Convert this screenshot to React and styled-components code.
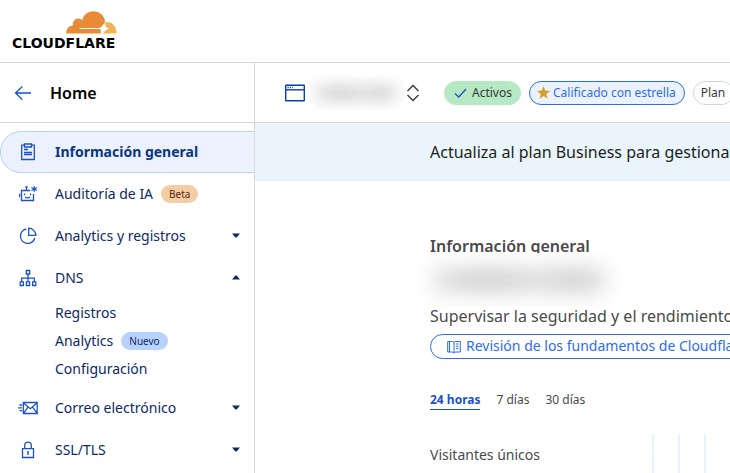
import React from "react";
import styled, { createGlobalStyle } from "styled-components";

const Global = createGlobalStyle`
  *, *::before, *::after { box-sizing: border-box; }
  html, body, #root { height: 100%; }
  body { margin: 0; background: #fff; color: #36393a; font-family: "Noto Sans", sans-serif; font-size: 14px; overflow: hidden; }
  button { font: inherit; color: inherit; background: none; border: 0; padding: 0; cursor: pointer; }
  a { color: inherit; text-decoration: none; }
  h1, p, ul { margin: 0; padding: 0; }
  ul { list-style: none; }
  svg { display: block; flex: none; }
`;

const Page = styled.div`
  display: flex;
  flex-direction: column;
  height: 100vh;
  overflow: hidden;
`;

const TopBar = styled.header`
  flex: none;
  height: 63px;
  padding: 11px 12px 0;
  border-bottom: 1px solid #d5d7d8;
`;

const Logo = styled.a`
  display: inline-flex;
  flex-direction: column;
  align-items: flex-start;

  svg {
    margin-left: 54px;
  }
`;

const Wordmark = styled.span`
  font-family: "DejaVu Sans", sans-serif;
  font-size: 14px;
  line-height: 18px;
  font-weight: 700;
  color: #000;
`;

const Body = styled.div`
  flex: 1;
  min-height: 0;
  display: flex;
`;

const Sidebar = styled.aside`
  flex: none;
  width: 255px;
  border-right: 1px solid #d5d7d8;
  overflow: hidden;
`;

const HomeLink = styled.a`
  display: flex;
  align-items: center;
  gap: 18px;
  height: 60px;
  padding-left: 14px;
  border-bottom: 1px solid #d5d7d8;
  font-size: 16px;
  font-weight: 600;
  color: #000;
`;

const Nav = styled.nav`
  padding-top: 8px;
`;

const NavItem = styled.a`
  display: flex;
  align-items: center;
  width: 100%;
  height: 42px;
  padding: 0 14px 2px 17px;
  border: 1px solid ${(p) => (p.$active ? "#b9d0fb" : "transparent")};
  border-right: 0;
  border-radius: 21px 0 0 21px;
  background: ${(p) => (p.$active ? "#ecf2fd" : "transparent")};
  font-size: 14px;
  font-weight: ${(p) => (p.$active ? 700 : 400)};
  color: ${(p) => (p.$active ? "#0c3584" : "#0b2a66")};
  text-align: left;
`;

const IconSlot = styled.span`
  display: flex;
  justify-content: center;
  width: 20px;
  margin-right: 17px;
  padding-top: 2px;
`;

const Caret = styled.svg`
  margin-left: auto;
`;

const SubList = styled.ul`
  padding: 0 0 4px 55px;
`;

const SubLink = styled.a`
  display: flex;
  align-items: center;
  height: 28px;
  padding-bottom: 2px;
  font-size: 14px;
  color: #0b2a66;
`;

const Tag = styled.span`
  margin: 2px 0 0 8px;
  padding: 0 8px;
  border-radius: 9px;
  font-size: 10px;
  line-height: 18px;
  background: ${(p) => (p.$tone === "orange" ? "#f4cda5" : "#b9d2fd")};
  color: ${(p) => (p.$tone === "orange" ? "#4d2a0c" : "#0b2a66")};
`;

const Main = styled.main`
  flex: 1;
  min-width: 0;
  overflow: hidden;
`;

const SiteBar = styled.div`
  display: flex;
  align-items: center;
  height: 60px;
  padding-left: 29px;
  border-bottom: 1px solid #d5d7d8;
  white-space: nowrap;
`;

const SitePicker = styled.button`
  display: flex;
  align-items: center;
  gap: 1px;
  margin-right: 24px;
`;

const Redacted = styled.span`
  display: flex;
  align-items: center;
  overflow: hidden;
  background: #fff;
  width: ${(p) => (p.$large ? "212px" : "98px")};
  height: ${(p) => (p.$large ? "53px" : "34px")};
  padding: ${(p) => (p.$large ? "0 18px 0 24px" : "0 8px")};

  &::before {
    content: "";
    flex: 1;
    height: ${(p) => (p.$large ? "22px" : "14px")};
    border-radius: 8px;
    background: linear-gradient(90deg, #d9d9d9, #c9c9c9 35%, #dadada 60%, #cacaca 80%, #d4d4d4);
    filter: blur(${(p) => (p.$large ? "11px" : "8px")});
  }
`;

const Badge = styled.span`
  display: flex;
  align-items: center;
  flex: none;
  gap: ${(p) => (p.$tone === "blue" ? "3px" : "4px")};
  height: 24px;
  margin-right: 8px;
  padding: 0 8px 0 ${(p) => (p.$tone === "green" ? "8px" : "7px")};
  border: 1px solid ${(p) => ({ green: "#b6e8c3", blue: "#2c6df0", plain: "#d5d7d8" })[p.$tone]};
  border-radius: 12px;
  background: ${(p) => ({ green: "#b6e8c3", blue: "#ecf2fd", plain: "#fff" })[p.$tone]};
  color: ${(p) => (p.$tone === "blue" ? "#2c6df0" : "#36393a")};
  font-size: 12px;
`;

const Banner = styled.p`
  height: 58px;
  padding-left: 175px;
  background: #e9f5fb;
  color: #1d1f20;
  font-size: 16px;
  line-height: 58px;
  white-space: nowrap;
`;

const Content = styled.section`
  padding: 54px 0 0 175px;
  white-space: nowrap;
  color: #4a4a4a;
`;

const Title = styled.h1`
  height: 18px;
  overflow: hidden;
  font-size: 16px;
  font-weight: 600;
  line-height: 22px;
`;

const SiteName = styled.div`
  margin-left: -20px;
`;

const Lead = styled.p`
  font-size: 16px;
  line-height: 20px;
`;

const GuideLink = styled.a`
  display: inline-flex;
  align-items: center;
  gap: 5px;
  height: 25px;
  margin-top: 8px;
  padding: 0 16px 2px;
  border: 1px solid #2c6df0;
  border-radius: 13px;
  color: #2c6df0;

  svg {
    margin-top: 2px;
  }
`;

const Ranges = styled.div`
  display: flex;
  gap: 16px;
  margin-top: 32px;
`;

const Range = styled.button`
  height: 19px;
  border-bottom: 1px solid ${(p) => (p.$active ? "#1d52c4" : "transparent")};
  color: ${(p) => (p.$active ? "#1d52c4" : "#4a4a4a")};
  font-size: 12px;
  font-weight: ${(p) => (p.$active ? 700 : 400)};
  line-height: 18px;
`;

const Metric = styled.div`
  display: flex;
  margin-top: 24px;
`;

const MetricLabel = styled.span`
  width: 222px;
  line-height: 42px;
`;

const svgProps = { fill: "none", stroke: "#1d52c4", strokeWidth: 1.3 };

const CloudLogo = () => (
  <svg width="51" height="23" viewBox="0 0 51 23" aria-hidden="true">
    <path fill="#e98b36" d="M.4 22.5C0 18.5 2.4 14.9 7 14.6C6.4 10.4 9.2 7.3 12.4 7.5C14 7.6 15.3 8.3 16.3 9.2C17.3 4 21.8.3 27.3.3C33.3.3 38.2 4.5 39 10.2L37.6 15.8L34.6 19L34.9 22.5Z" />
    <path fill="#f1b355" d="M39.6 11C46.2 10.3 50.6 15.1 50.4 22.5H36.2L38.2 20.3L43 17.5L39.4 15.7Z" />
    <path fill="#fff" d="M13 16.9H33.2Q36 16.5 37.5 12.5Q38.8 16.5 43 17.4Q38.8 18.2 37.5 22.5Q36.2 18.5 33.2 18H15Z" />
  </svg>
);

const BackIcon = () => (
  <svg width="18" height="18" viewBox="0 0 18 18" {...svgProps}>
    <path d="M17 9H1.5M8.3 2.5L1.5 9L8.3 15.5" />
  </svg>
);

const ClipboardIcon = () => (
  <svg width="16" height="18" viewBox="0 0 16 18" {...svgProps}>
    <path d="M4.5 2.2H1.7V16.5H14.3V2.2H11.5M4.5 1H11.5V4H4.5ZM4 6.5H8M4 9.5H12M4 11.5H12" />
  </svg>
);

const RobotIcon = () => (
  <svg width="20" height="18" viewBox="0 0 20 18" {...svgProps}>
    <path d="M12 5.5H3.5V15.5H15.5V9M8.5 5V1.8M7.2 1.8H9.8M1.6 8.8V12.2M6.5 8.5V10.2M12.5 8.5V10.2M7 12Q9.5 13.8 12 12" />
    <path strokeWidth="1.1" d="M16.2 1V7M13.4 2.6L19 5.4M19 2.6L13.4 5.4" />
    <circle cx="16.2" cy="4" r="1.3" fill="#1d52c4" stroke="none" />
  </svg>
);

const PieIcon = () => (
  <svg width="18" height="18" viewBox="0 0 18 18" {...svgProps}>
    <path d="M7.3 2A7.3 7.3 0 1 0 15.8 11M9.7 1.2V8.4H16.8A7.2 7.2 0 0 0 9.7 1.2Z" />
  </svg>
);

const TreeIcon = () => (
  <svg width="18" height="18" viewBox="0 0 18 18" {...svgProps}>
    <path d="M7.3 1.5H10.7V5H7.3ZM9 5V12.8M2.7 12.8V9.2H15.3V12.8M1.2 12.8H4.4V16.5H1.2ZM7.4 12.8H10.6V16.5H7.4ZM13.6 12.8H16.8V16.5H13.6Z" />
  </svg>
);

const MailIcon = () => (
  <svg width="20" height="14" viewBox="0 0 20 14" {...svgProps}>
    <path d="M5.3 1.5H19.2V12.5H5.3ZM5.6 2L12.3 7.7L19 2M5.6 12.2L10 6.2M19 12.2L14.6 6.2M1.4 4H4M0 6.8H4M1.4 9.7H4" />
  </svg>
);

const LockIcon = () => (
  <svg width="14" height="18" viewBox="0 0 14 18" {...svgProps}>
    <path d="M1.5 7.7H12.5V16.5H1.5ZM3.7 7.5V4.4A3.3 3.3 0 0 1 10.3 4.4V7.5M7 10.5V14" />
    <path d="M6 11.2H8" />
  </svg>
);

const WindowIcon = () => (
  <svg width="22" height="18" viewBox="0 0 22 18" fill="none" stroke="#0b3fa8" strokeWidth="1.4">
    <rect x="1.7" y="1.2" width="18.6" height="15.6" rx=".5" />
    <path d="M2 5.8H20" />
    <path strokeDasharray="1.2 1.2" d="M3.5 3.5H9" />
  </svg>
);

const SortIcon = () => (
  <svg width="14" height="18" viewBox="0 0 14 18" fill="none" stroke="#36393a" strokeWidth="1.4">
    <path d="M1.5 7L7 1.5L12.5 7M1.5 11L7 16.5L12.5 11" />
  </svg>
);

const CheckIcon = () => (
  <svg width="15" height="12" viewBox="0 0 15 12" {...svgProps}>
    <path d="M2 6.5L5.8 10L13 2" />
  </svg>
);

const StarIcon = () => (
  <svg width="13" height="13" viewBox="0 0 12 12" fill="#d79f2b">
    <path d="M6 0L7.6 4.2L12 4.5L8.6 7.3L9.7 11.8L6 9.3L2.3 11.8L3.4 7.3L0 4.5L4.4 4.2Z" />
  </svg>
);

const BookIcon = () => (
  <svg width="14" height="14" viewBox="0 0 14 14" fill="none" stroke="#2c6df0" strokeWidth="1">
    <path d="M7 2.2L5.3 1.5H.7V12H5.3L7 13L8.7 12H13.3V1.5H8.7ZM7 2.2V13M2.5 1.5V12M8.8 4H11.5M8.8 6.3H11.5M8.8 8.6H11.5" />
  </svg>
);

const CaretIcon = ({ up }) => (
  <Caret width="8" height="5" viewBox="0 0 8 5" fill="#0b2a66">
    <path d={up ? "M0 4.5L3.4 .5H4.6L8 4.5Z" : "M0 .5H8L4.6 4.5H3.4Z"} />
  </Caret>
);

const GridLines = () => (
  <svg width="60" height="42" viewBox="0 0 60 42" fill="none" stroke="#e9f3fc" strokeWidth="2" aria-hidden="true">
    <path d="M1 0V42M27 0V42M53 0V42" />
  </svg>
);

const Entry = ({ icon: Icon, label, tag, active, menu, open }) => (
  <NavItem
    as={menu ? "button" : "a"}
    href={menu ? undefined : "#"}
    aria-expanded={menu ? !!open : undefined}
    aria-current={active ? "page" : undefined}
    $active={active}
  >
    <IconSlot><Icon /></IconSlot>
    {label}
    {tag && <Tag $tone="orange">{tag}</Tag>}
    {menu && <CaretIcon up={open} />}
  </NavItem>
);

export default function App() {
  return (
    <Page>
      <Global />
      <TopBar>
        <Logo href="#">
          <CloudLogo />
          <Wordmark>CLOUDFLARE</Wordmark>
        </Logo>
      </TopBar>
      <Body>
        <Sidebar>
          <HomeLink href="#"><BackIcon />Home</HomeLink>
          <Nav>
            <Entry icon={ClipboardIcon} label="Información general" active />
            <Entry icon={RobotIcon} label="Auditoría de IA" tag="Beta" />
            <Entry icon={PieIcon} label="Analytics y registros" menu />
            <Entry icon={TreeIcon} label="DNS" menu open />
            <SubList>
              <li><SubLink href="#">Registros</SubLink></li>
              <li><SubLink href="#">Analytics<Tag $tone="blue">Nuevo</Tag></SubLink></li>
              <li><SubLink href="#">Configuración</SubLink></li>
            </SubList>
            <Entry icon={MailIcon} label="Correo electrónico" menu />
            <Entry icon={LockIcon} label="SSL/TLS" menu />
          </Nav>
        </Sidebar>
        <Main>
          <SiteBar>
            <SitePicker aria-label="Sitio">
              <WindowIcon />
              <Redacted />
              <SortIcon />
            </SitePicker>
            <Badge $tone="green"><CheckIcon />Activos</Badge>
            <Badge $tone="blue"><StarIcon />Calificado con estrella</Badge>
            <Badge $tone="plain">Plan</Badge>
          </SiteBar>
          <Banner>Actualiza al plan Business para gestiona</Banner>
          <Content>
            <Title>Información general</Title>
            <SiteName><Redacted $large /></SiteName>
            <Lead>Supervisar la seguridad y el rendimiento</Lead>
            <GuideLink href="#"><BookIcon />Revisión de los fundamentos de Cloudflare</GuideLink>
            <Ranges>
              <Range $active>24 horas</Range>
              <Range>7 días</Range>
              <Range>30 días</Range>
            </Ranges>
            <Metric>
              <MetricLabel>Visitantes únicos</MetricLabel>
              <GridLines />
            </Metric>
          </Content>
        </Main>
      </Body>
    </Page>
  );
}
